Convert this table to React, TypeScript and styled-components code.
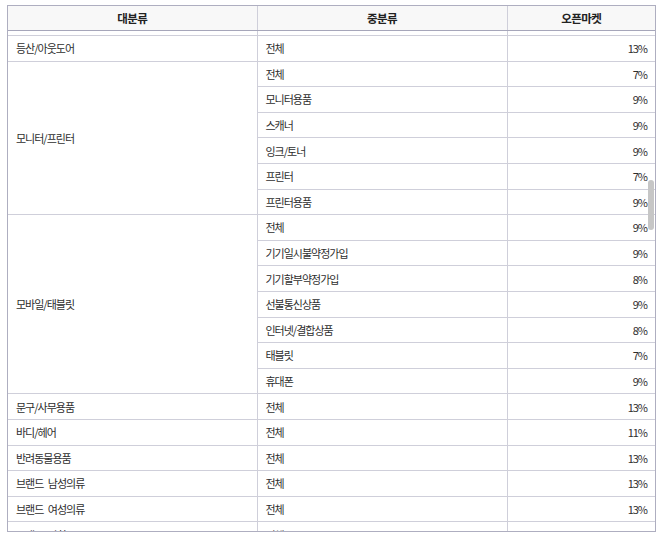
import React from 'react';
import styled, { createGlobalStyle } from 'styled-components';

const GlobalStyle = createGlobalStyle`
  html, body { margin: 0; padding: 0; background: #fff; }
  body { font-family: "Noto Sans CJK KR", "Noto Sans", sans-serif; }
`;

type Row = { mid: string; rate: string };
type Group = { major: string; rows: Row[] };

const groups: Group[] = [
  { major: '등산/아웃도어', rows: [{ mid: '전체', rate: '13%' }] },
  {
    major: '모니터/프린터',
    rows: [
      { mid: '전체', rate: '7%' },
      { mid: '모니터용품', rate: '9%' },
      { mid: '스캐너', rate: '9%' },
      { mid: '잉크/토너', rate: '9%' },
      { mid: '프린터', rate: '7%' },
      { mid: '프린터용품', rate: '9%' },
    ],
  },
  {
    major: '모바일/태블릿',
    rows: [
      { mid: '전체', rate: '9%' },
      { mid: '기기일시불약정가입', rate: '9%' },
      { mid: '기기할부약정가입', rate: '8%' },
      { mid: '선불통신상품', rate: '9%' },
      { mid: '인터넷/결합상품', rate: '8%' },
      { mid: '태블릿', rate: '7%' },
      { mid: '휴대폰', rate: '9%' },
    ],
  },
  { major: '문구/사무용품', rows: [{ mid: '전체', rate: '13%' }] },
  { major: '바디/헤어', rows: [{ mid: '전체', rate: '11%' }] },
  { major: '반려동물용품', rows: [{ mid: '전체', rate: '13%' }] },
  { major: '브랜드 남성의류', rows: [{ mid: '전체', rate: '13%' }] },
  { major: '브랜드 여성의류', rows: [{ mid: '전체', rate: '13%' }] },
  { major: '브랜드 잡화', rows: [{ mid: '전체', rate: '13%' }] },
];

const Frame = styled.div`
  position: relative;
  width: 647px;
  height: 525px;
  margin: 5px 0 0 7px;
  border: 1px solid #aeaec0;
  overflow: hidden;
  background: #fff;
`;

const Table = styled.table`
  width: 100%;
  border-collapse: collapse;
  border-style: hidden;
  table-layout: fixed;
  font-size: 11px;
  letter-spacing: -1px;
  word-spacing: 3px;
  color: #2e2e2e;
`;

const HeadCell = styled.th`
  height: 24px;
  padding: 0;
  background: #f8f8f8;
  border: 1px solid #cfcfda;
  border-bottom-color: #a6a6ba;
  font-size: 11.5px;
  font-weight: 700;
  letter-spacing: -0.6px;
  color: #222;
  text-align: center;
  vertical-align: middle;
`;

const Cell = styled.td<{ $align?: 'left' | 'right' }>`
  height: 24.6px;
  padding: 0 8px 0 8px;
  border: 1px solid #cfcfda;
  text-align: ${p => p.$align ?? 'left'};
  vertical-align: middle;
  white-space: nowrap;
  overflow: hidden;
`;

const SliverCell = styled.td`
  height: 4px;
  padding: 0;
  border: 1px solid #cfcfda;
  border-top-color: #a6a6ba;
`;

const Thumb = styled.div`
  position: absolute;
  top: 174px;
  right: 1px;
  width: 6px;
  height: 50px;
  border-radius: 3px;
  background: #c6c6c6;
`;

export default function App() {
  return (
    <>
      <GlobalStyle />
      <Frame>
        <Table>
          <colgroup>
            <col style={{ width: 249 }} />
            <col style={{ width: 250 }} />
            <col />
          </colgroup>
          <thead>
            <tr>
              <HeadCell>대분류</HeadCell>
              <HeadCell>중분류</HeadCell>
              <HeadCell>오픈마켓</HeadCell>
            </tr>
          </thead>
          <tbody>
            <tr>
              <SliverCell />
              <SliverCell />
              <SliverCell />
            </tr>
            {groups.map(g =>
              g.rows.map((r, i) => (
                <tr key={g.major + r.mid}>
                  {i === 0 && <Cell rowSpan={g.rows.length}>{g.major}</Cell>}
                  <Cell>{r.mid}</Cell>
                  <Cell $align="right">{r.rate}</Cell>
                </tr>
              ))
            )}
          </tbody>
        </Table>
        <Thumb />
      </Frame>
    </>
  );
}
